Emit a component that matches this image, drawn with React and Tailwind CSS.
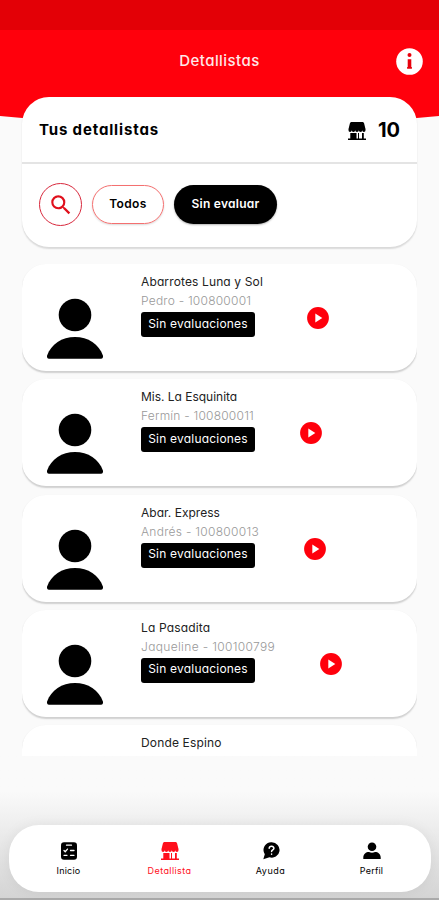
import React from 'react';
import { MdSearch } from 'react-icons/md';

const retailers = [
    { name: 'Abarrotes Luna y Sol', nameClass: 'tracking-[0.130px]', owner: 'Pedro - 100800001', ownerClass: 'tracking-[0.230px]', infoWidth: 'w-[166px]' },
    { name: 'Mis. La Esquinita', nameClass: '-tracking-[0.020px]', owner: 'Fermín - 100800011', ownerClass: 'tracking-[0.220px]', infoWidth: 'w-[159px]' },
    { name: 'Abar. Express', nameClass: 'tracking-[0.020px]', owner: 'Andrés - 100800013', ownerClass: 'tracking-[0.280px]', infoWidth: 'w-[163px]' },
    { name: 'La Pasadita', nameClass: 'tracking-[0.160px]', owner: 'Jaqueline - 100100799', ownerClass: 'tracking-[0.340px]', infoWidth: 'w-[179px]' },
    { name: 'Donde Espino', nameClass: 'tracking-[0.160px]' },
];

const StoreIcon = ({ className }) => (
    <svg viewBox="0 0 18 18" className={className} fill="currentColor">
        <path d="M3 0h12l1 1 1.500 6v1.300a1.600 1.600 0 0 1-3.200 0a1.700 1.700 0 0 1-3.500 0a1.800 1.800 0 0 1-3.600 0a1.700 1.700 0 0 1-3.500 0a1.600 1.600 0 0 1-3.200 0V7L2 1z" />
        <path d="M2.300 11H8.500v5.500h1.500V11h1v5.500h3V11h1.800v5.500H18V18H0v-1.500h2.300z" />
    </svg>
);

const ChecklistIcon = ({ className }) => (
    <svg viewBox="0 0 18 18" className={className}>
        <rect x="1" y="0.300" width="16" height="17.500" rx="3" fill="currentColor" />
        <path d="M6.500 3.200h5M10.500 8.500h3.500M10.500 13.300h3.500M4 8.500l1.200 1.200 2.300-2.600M4 13.300h3" fill="none" stroke="white" strokeWidth="1.300" strokeLinecap="round" />
    </svg>
);

const HelpIcon = ({ className }) => (
    <svg viewBox="0 0 18 18" className={className}>
        <path d="M9.700 0.300a7.700 7.700 0 1 1-2.300 15L1.300 17.200l1.500-5A7.700 7.700 0 0 1 9.700 0.300z" fill="currentColor" />
        <path d="M7.200 6.300c.2-2.800 4.800-2.600 4.700.1c-.1 1.500-2.300 1.600-2.300 3.200M9.600 11.900v.3" fill="none" stroke="white" strokeWidth="1.500" strokeLinecap="round" />
    </svg>
);

const ProfileIcon = ({ className }) => (
    <svg viewBox="0 0 18 18" className={className} fill="currentColor">
        <circle cx="9" cy="4.700" r="4.300" />
        <path d="M0.300 17v-1.500C.3 12 3 10 6 10c2 1 4 1 6 0c3 0 5.700 2 5.700 5.500V17z" />
    </svg>
);

const PlayIcon = () => (
    <svg viewBox="0 0 22 22" className="size-[22px]">
        <circle cx="11" cy="11" r="10.900" fill="#ff000c" />
        <path d="M8.300 6.500v9l7-4.500z" fill="white" />
    </svg>
);

const InfoIcon = () => (
    <svg viewBox="0 0 27 27" className="size-[27px]">
        <circle cx="13.500" cy="13.500" r="13.300" fill="white" />
        <circle cx="13.500" cy="7" r="2" fill="#e8000c" />
        <path d="M11.700 11.200h3.600v7.800h.6v1.700h-4.800V19h.6z" fill="#e8000c" />
    </svg>
);

const Avatar = () => (
    <svg viewBox="0 0 56 61" className="h-[61px] w-14 shrink-0">
        <circle cx="28" cy="17" r="16.300" />
        <path d="M1.800 60.800Q-.3 60.500 0 57.800C4 46 15 39 28 39S52 46 56 57.800Q56.300 60.500 54.200 60.800z" />
    </svg>
);

const RetailerCard = ({ retailer }) => (
    <div className="mb-[8.300px] flex h-[107px] shrink-0 rounded-[24px] bg-white pl-[25px] shadow-[0_1.500px_1.500px_rgba(0,0,0,0.17)]">
        <div className="pt-[34px]">
            <Avatar />
        </div>
        <div className={`ml-[38px] shrink-0 pt-[8px] text-[12px] leading-[19px] ${retailer.infoWidth ?? ''}`}>
            <p className={`whitespace-nowrap text-[#222] ${retailer.nameClass}`}>{retailer.name}</p>
            {retailer.owner && (
                <>
                    <p className={`whitespace-nowrap font-light text-[#999] ${retailer.ownerClass}`}>{retailer.owner}</p>
                    <span className="mt-[2px] flex h-[25px] w-[114px] items-center justify-center rounded-[3px] bg-black pb-[3px] tracking-[0.200px] text-white">
                        Sin evaluaciones
                    </span>
                </>
            )}
        </div>
        {retailer.owner && (
            <div className="pt-[43px]">
                <PlayIcon />
            </div>
        )}
    </div>
);

const NavItem = ({ icon, label, labelClass, active }) => (
    <div className={`flex w-[101px] flex-col items-center ${active ? 'text-[#ff101c]' : 'text-black'}`}>
        {icon}
        <span className={`mt-[5px] text-[9px] leading-3 ${labelClass}`}>{label}</span>
    </div>
);

const App = () => {
    return (
        <div className="flex h-[900px] w-[439px] flex-col overflow-hidden bg-[#fafafa] font-['Inter',sans-serif] [font-feature-settings:'cv11']">
            {/* Header */}
            <header className="h-[126px] shrink-0 bg-[#ff000c] [clip-path:ellipse(600px_146px_at_50%_-20px)]">
                <div className="h-[30px] bg-[#e30006]" />
                <div className="grid h-[63px] grid-cols-[1fr_auto_1fr] items-center pr-[16px]">
                    <h1 className="col-start-2 ml-[16px] text-[15px] font-medium tracking-[0.450px] text-[#ffe8e8]">Detallistas</h1>
                    <div className="justify-self-end">
                        <InfoIcon />
                    </div>
                </div>
            </header>

            {/* Summary and filters */}
            <section className="relative mx-[22px] -mt-[29px] h-[150px] shrink-0 rounded-[27px] bg-white shadow-[0_1.500px_1.500px_rgba(0,0,0,0.13)]">
                <div className="flex h-[67px] items-center border-b-2 border-[#e4e4e4] px-[17px]">
                    <h2 className="flex-1 pt-0.5 text-[15px] font-bold tracking-[0.850px]">Tus detallistas</h2>
                    <StoreIcon className="mt-0.5 size-[18px]" />
                    <span className="ml-3 text-[20px] font-bold">10</span>
                </div>
                <div className="flex items-center pl-[17px] pt-[19px]">
                    <button className="flex size-[43px] items-center justify-center rounded-full border border-[#d8283c]">
                        <MdSearch className="size-[26px] text-[#e0101c]" />
                    </button>
                    <button className="ml-[10px] h-[39px] w-[72px] rounded-full border-[1.500px] border-[#f47070] pb-0.5 text-[12px] font-semibold tracking-[0.350px] shadow-[0_1px_2px_rgba(0,0,0,0.15)]">
                        Todos
                    </button>
                    <button className="ml-[10px] h-[39px] w-[103px] rounded-full bg-black pb-0.5 text-[12px] font-semibold tracking-[0.250px] text-white shadow-[0_1px_2px_rgba(0,0,0,0.3)]">
                        Sin evaluar
                    </button>
                </div>
            </section>

            {/* Retailer list */}
            <main className="mx-[22px] mt-[17px] flex h-[492px] shrink-0 flex-col overflow-hidden">
                {retailers.map((retailer) => (
                    <RetailerCard key={retailer.name} retailer={retailer} />
                ))}
            </main>

            {/* Bottom navigation */}
            <footer className="flex flex-1 flex-col justify-end border-b-2 border-[#aaa] bg-linear-to-b from-[#fafafa] from-25% to-[#d4d4d4]">
                <nav className="mb-[6px] ml-[9px] flex h-[67px] w-[422px] rounded-[30px] bg-white pl-[9px] pt-[17px] shadow-[0_0_14px_rgba(0,0,0,0.06)]">
                    <NavItem icon={<ChecklistIcon className="size-[18px]" />} label="Inicio" labelClass="tracking-[0.200px]" />
                    <NavItem icon={<StoreIcon className="size-[18px]" />} label="Detallista" labelClass="tracking-[0.400px]" active />
                    <NavItem icon={<HelpIcon className="size-[18px]" />} label="Ayuda" labelClass="tracking-[0.500px]" />
                    <NavItem icon={<ProfileIcon className="size-[18px]" />} label="Perfil" labelClass="tracking-[0.200px]" />
                </nav>
            </footer>
        </div>
    );
};

export default App;
